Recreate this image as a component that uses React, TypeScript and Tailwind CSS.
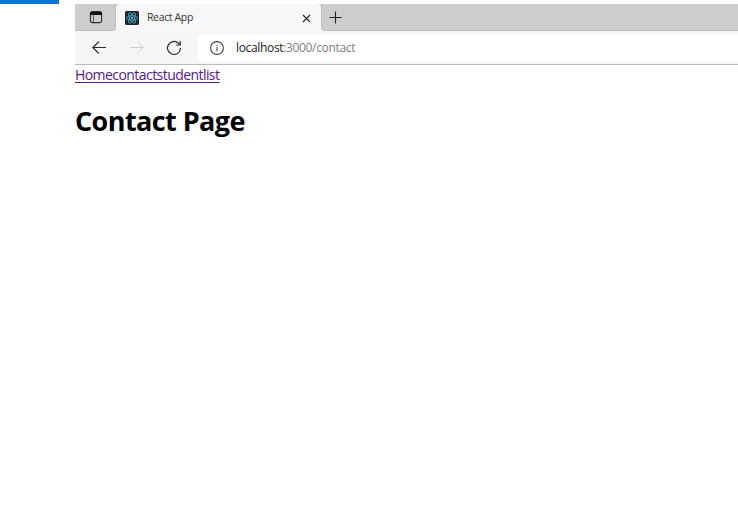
function TabActionsIcon() {
  return (
    <svg width="14" height="14" viewBox="0 0 14 14" fill="none">
      <rect x="1.4" y="1.9" width="11.2" height="10.7" rx="1.8" stroke="#2b2b2b" strokeWidth="1.1" />
      <path d="M1 3.6A2.2 2.2 0 0 1 3.2 1.4h7.6A2.2 2.2 0 0 1 13 3.6v1.4H1z" fill="#111" />
      <path d="M4.4 4v8.4" stroke="#555" strokeWidth="1" />
    </svg>
  );
}

function ReactLogo() {
  return (
    <svg width="14" height="14" viewBox="0 0 14 14" fill="none">
      <rect width="14" height="14" rx="1.5" fill="#20242b" />
      <g stroke="#4fb4d0" strokeWidth="0.75">
        <ellipse cx="7" cy="7" rx="5.8" ry="2.3" />
        <ellipse cx="7" cy="7" rx="5.8" ry="2.3" transform="rotate(60 7 7)" />
        <ellipse cx="7" cy="7" rx="5.8" ry="2.3" transform="rotate(120 7 7)" />
      </g>
      <circle cx="7" cy="7" r="1.1" fill="#61dafb" />
    </svg>
  );
}

function TabStrip() {
  return (
    <div className="flex h-[28px] bg-[#f7f7f7]">
      <div className="flex h-[27px] w-[41px] items-center justify-center rounded-br-[4px] border-b border-r border-[#bfbfbf] bg-[#cdcdcd] pl-[1px]">
        <TabActionsIcon />
      </div>
      <div className="flex h-full w-[205px] items-center bg-[#cdcdcd]">
        <div className="flex h-full w-full items-center rounded-t-[4px] bg-[#f7f7f7] pl-[8.5px] pr-[10px]">
          <ReactLogo />
          <span className="ml-[8.5px] whitespace-nowrap pb-[2px] text-[10.5px] leading-none tracking-[-0.36px] text-[#333]">React App</span>
          <svg className="ml-auto" width="9" height="9" viewBox="0 0 9 9" stroke="#222" strokeWidth="1.1">
            <path d="M1 1l7 7M8 1L1 8" />
          </svg>
        </div>
      </div>
      <div className="flex h-[27px] flex-1 items-center rounded-bl-[4px] border-b border-l border-[#bfbfbf] bg-[#cdcdcd] pl-[7px]">
        <svg width="13" height="13" viewBox="0 0 13 13" stroke="#222" strokeWidth="1.1">
          <path d="M6.5 0.5v12M0.5 6.5h12" />
        </svg>
      </div>
    </div>
  );
}

function Toolbar() {
  return (
    <div className="flex h-[33px] items-center border-b border-[#bcbcbc] bg-[#f6f6f6] pl-[17px]">
      <svg width="14" height="14" viewBox="0 0 14 14" fill="none" stroke="#2b2b2b" strokeWidth="1.1">
        <path d="M14 6.5H0.8M6.8 0.5L0.8 6.5l6 6" />
      </svg>
      <svg className="ml-[24px]" width="14" height="14" viewBox="0 0 14 14" fill="none" stroke="#cecece" strokeWidth="1">
        <path d="M0 6.5h13.2M7.2 0.5l6 6-6 6" />
      </svg>
      <svg className="ml-[22px]" width="16" height="16" viewBox="0 0 16 16" fill="none" stroke="#2b2b2b" strokeWidth="1.2">
        <path d="M14.5 8A6.5 6.5 0 1 1 12.4 3.2L14 4.8" />
        <path d="M14.2 1v4h-4" />
      </svg>
      <div className="ml-[16px] flex h-[26px] flex-1 items-center rounded-l-[4px] bg-white pl-[12px]">
        <svg width="14" height="14" viewBox="0 0 14 14" fill="none" stroke="#444" strokeWidth="1.1">
          <circle cx="7" cy="7" r="6.4" />
          <path d="M7 6v4.3M7 3.7v1.2" />
        </svg>
        <span className="ml-[12px] whitespace-nowrap text-[12px] leading-none tracking-[-0.34px] text-[#808080]">
          <span className="text-[#1c1c1c]">localhost</span>:3000/contact
        </span>
      </div>
    </div>
  );
}

export default function App() {
  return (
    <div className="h-[512px] w-[738px] overflow-hidden bg-white font-['Open_Sans','Noto_Sans',sans-serif]">
      <div className="h-[4px] w-[59px] bg-[#0078d7]" />
      <div className="ml-[75px]">
        <TabStrip />
        <Toolbar />
        <nav className="mt-[1px] flex h-[20px] text-[14px] leading-[18px] tracking-[-0.56px] text-[#551a8b] underline underline-offset-2">
          <a href="#home">Home</a>
          <a href="#contact">contact</a>
          <a href="#studentlist">studentlist</a>
        </nav>
        <h1 className="mt-[17px] text-[27px] font-bold leading-[36px] tracking-[-0.58px] text-black">Contact Page</h1>
      </div>
    </div>
  );
}
